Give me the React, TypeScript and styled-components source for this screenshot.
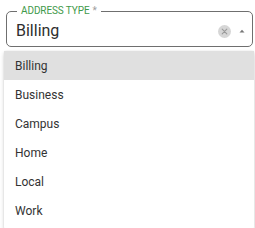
import * as React from "react";
import styled, { createGlobalStyle } from "styled-components";

const GlobalStyle = createGlobalStyle`
  html, body {
    margin: 0;
    padding: 0;
    background: #fff;
    font-family: Roboto, "Liberation Sans", sans-serif;
  }
`;

const options = ["Billing", "Business", "Campus", "Home", "Local", "Work"];

export default function App() {
  const [value] = React.useState("Billing");
  return (
    <Page>
      <GlobalStyle />
      <Field>
        <Legend>
          <LegendText>ADDRESS TYPE</LegendText>
          <Required>*</Required>
        </Legend>
        <Value>{value}</Value>
        <Adornments>
          <ClearIcon viewBox="0 0 13 13">
            <circle cx="6.5" cy="6.5" r="6.5" fill="#d6d6d6" />
            <path d="M4.2 4.2 L8.8 8.8 M8.8 4.2 L4.2 8.8" stroke="#9a9a9a" strokeWidth="1.1" strokeLinecap="round" />
          </ClearIcon>
          <ArrowIcon viewBox="0 0 6 4">
            <path d="M0.5 3.5 L3 0.8 L5.5 3.5 Z" fill="#757575" />
          </ArrowIcon>
        </Adornments>
      </Field>
      <Menu>
        {options.map((o) => (
          <Item key={o} selected={o === value}>
            {o}
          </Item>
        ))}
      </Menu>
    </Page>
  );
}

const Page = styled.div`
  width: 255px;
  height: 228px;
  overflow: hidden;
  padding-top: 11px;
  box-sizing: border-box;
`;

const Field = styled.div`
  position: relative;
  margin-left: 6px;
  width: 247px;
  height: 36px;
  box-sizing: border-box;
  border: 1px solid #6f6f6f;
  border-radius: 5px;
  display: flex;
  align-items: center;
  padding: 4px 7px 0 9px;
`;

const Legend = styled.div`
  position: absolute;
  top: -7px;
  left: 10px;
  padding: 0 4px;
  background: #fff;
  font-size: 10px;
  line-height: 12px;
  display: flex;
  gap: 3px;
`;

const LegendText = styled.span`
  color: #3f9a4a;
  letter-spacing: -0.1px;
`;

const Required = styled.span`
  color: #9e9e9e;
`;

const Value = styled.div`
  flex: 1;
  font-size: 16px;
  color: #2e2e2e;
  line-height: 20px;
`;

const Adornments = styled.div`
  display: flex;
  align-items: center;
  gap: 8px;
`;

const ClearIcon = styled.svg`
  width: 13px;
  height: 13px;
`;

const ArrowIcon = styled.svg`
  width: 6px;
  height: 4px;
  margin-top: -1px;
`;

const Menu = styled.div`
  margin: 4px 0 0 4px;
  width: 250px;
  background: #fff;
  box-shadow: 0 2px 4px rgba(0, 0, 0, 0.18), 0 0 1px rgba(0, 0, 0, 0.2);
  border-radius: 2px;
  padding-bottom: 4px;
`;

const Item = styled.div<{ selected?: boolean }>`
  height: 29px;
  display: flex;
  align-items: center;
  padding-left: 11px;
  font-size: 12px;
  color: #333;
  background: ${(p) => (p.selected ? "#e0e0e0" : "#fff")};
`;
